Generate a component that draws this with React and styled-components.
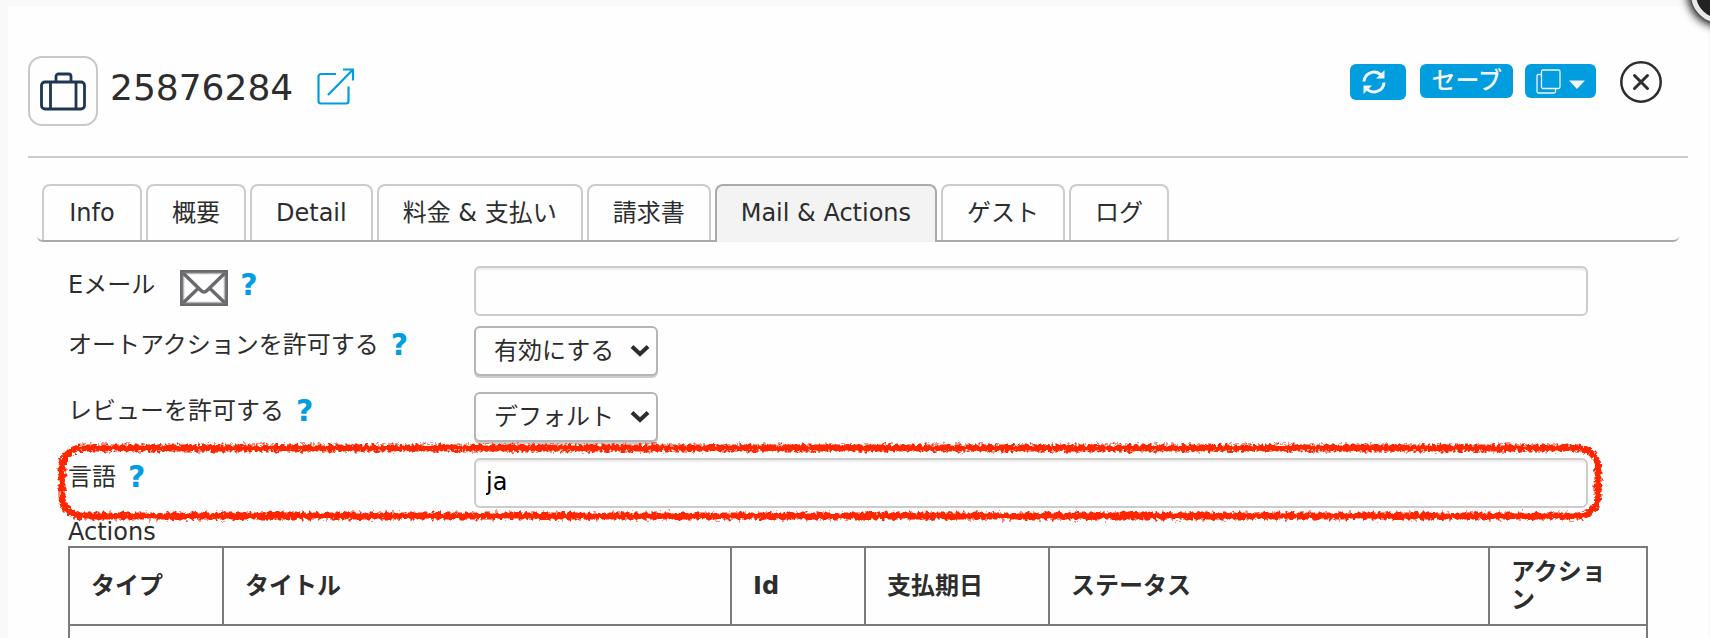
import React from 'react';
import styled, {createGlobalStyle} from "styled-components";

const GlobalStyle = createGlobalStyle`
  * {
    box-sizing: border-box;
  }

  body {
    margin: 0;
    background-color: #f9f9f9;
    color: #2d2d2d;
    font-family: "DejaVu Sans", Verdana, "Noto Sans CJK JP", sans-serif;
    font-size: 24px;
    line-height: 28px;
  }

  button, input, select {
    font: inherit;
    color: inherit;
  }
`;

const Page = styled.div`
  position: relative;
  overflow: hidden;
  min-height: 100vh;
  padding: 6px 2px 0 8px;
`;

const Panel = styled.main`
  min-height: calc(100vh - 6px);
  padding: 50px 20px 0;
  background-color: #fefefe;
`;

const Header = styled.header`
  display: flex;
  align-items: flex-start;
  height: 102px;
  border-bottom: 2px solid #ccc;
`;

const IconBox = styled.span`
  width: 70px;
  height: 70px;
  border: 2px solid #c8c8c8;
  border-radius: 14px;
  display: flex;
  align-items: center;
  justify-content: center;
`;

const Title = styled.h1`
  margin: 11px 24px 0 12px;
  font-size: 36px;
  font-weight: normal;
  line-height: 42px;
`;

const OpenLink = styled.a`
  display: flex;
  margin-top: 11px;
  color: #009ddf;
`;

const Toolbar = styled.div`
  display: flex;
  align-items: flex-start;
  gap: 12px;
  margin: 8px 26px 0 auto;
`;

const ToolButton = styled.button`
  display: flex;
  align-items: center;
  justify-content: center;
  gap: 8px;
  min-width: 56px;
  height: ${({$tall}) => $tall ? 36 : 34}px;
  margin-right: ${({$tall}) => $tall ? 2 : 0}px;
  padding: 0 11px;
  border: none;
  border-radius: 6px;
  background-color: #009ddf;
  color: #f3f3f3;
  font-weight: 500;
  line-height: 30px;
  cursor: pointer;
`;

const CloseButton = styled.button`
  display: flex;
  margin: -3px 0 0 12px;
  padding: 0;
  border: none;
  background: none;
  cursor: pointer;
`;

const Tabs = styled.nav`
  display: flex;
  align-items: flex-start;
  gap: 4px;
  margin: 26px 9px 0;
  padding: 0 5px;
  height: 58px;
  border-bottom: 2px solid #aaa;
  border-radius: 0 0 6px 6px;
`;

const Tab = styled.button`
  min-width: 100px;
  height: ${({$active}) => $active ? 58 : 56}px;
  padding: 0 24px ${({$active}) => $active ? 2 : 0}px;
  border: 2px solid ${({$active}) => $active ? '#aaa' : '#ccc'};
  border-bottom: none;
  border-radius: 8px 8px 0 0;
  background-color: ${({$active}) => $active ? '#f3f3f3' : '#fefefe'};
  white-space: nowrap;
  cursor: pointer;
`;

const Content = styled.section`
  padding: 24px 40px 0;
`;

const Row = styled.div`
  position: relative;
  display: grid;
  grid-template-columns: 406px 1fr;
  align-items: start;
  min-height: 50px;
  margin: 0 60px ${({$gap}) => $gap || 16}px 0;
`;

const LabelCell = styled.div`
  display: flex;
  align-items: center;
  height: 38px;
`;

const Envelope = styled.svg`
  margin: 6px 0 0 25px;
`;

const Help = styled.button`
  margin-left: 12px;
  padding: 0;
  border: none;
  background: none;
  color: #009ddf;
  font-size: 30px;
  font-weight: bold;
  line-height: 28px;
  cursor: pointer;
`;

const Input = styled.input`
  width: 100%;
  height: 50px;
  padding: 0 10px 2px;
  border: 2px solid #ccc;
  border-radius: 6px;
  background-color: #fefefe;
  box-shadow: inset 0 2px 2px rgba(0, 0, 0, 0.08);
  color: #000;
`;

const SelectWrap = styled.div`
  display: grid;
  align-items: center;
  width: 184px;

  > * {
    grid-area: 1 / 1;
  }

  svg {
    justify-self: end;
    margin-right: 8px;
    pointer-events: none;
  }
`;

const Select = styled.select`
  appearance: none;
  width: 100%;
  height: 50px;
  padding: 0 36px 0 18px;
  border: 2px solid #b5b5b5;
  border-radius: 6px;
  background-color: #fefefe;
  box-shadow: 0 2px 0 #ccc;
`;

const Marker = styled.svg`
  position: absolute;
  top: -10px;
  left: -6px;
  width: calc(100% + 16px);
  height: 68px;
  overflow: visible;
  pointer-events: none;
`;

const Table = styled.table`
  width: 100%;
  border-collapse: collapse;
  table-layout: fixed;

  caption {
    text-align: left;
  }

  th, td {
    height: 78px;
    padding: 0 21px;
    border: 2px solid #7b7b7b;
    text-align: left;
  }
`;

const Col = styled.col`
  width: ${({$width}) => $width};
`;

const CornerClose = styled.button`
  position: absolute;
  top: -35px;
  right: -39px;
  width: 58px;
  height: 58px;
  border: 5px solid #e8e8e8;
  border-radius: 50%;
  background-color: #222;
  box-shadow: 0 0 10px 3px #000;
`;

const tabs = ['Info', '概要', 'Detail', '料金 & 支払い', '請求書', 'Mail & Actions', 'ゲスト', 'ログ'];

const columns = [
    {title: 'タイプ', width: '154px'},
    {title: 'タイトル', width: 'auto'},
    {title: 'Id', width: '134px'},
    {title: '支払期日', width: '184px'},
    {title: 'ステータス', width: '440px'},
    {title: 'アクション', width: '158px'},
];

const Suitcase = () => (
    <svg width="48" height="40" viewBox="0 0 48 40" fill="none" stroke="#1f3652" strokeWidth="2.8">
        <rect x="2.500" y="11" width="43" height="27" rx="3.500"/>
        <path d="M11.500 11v27M37 11v27M17 11V5.500a2.500 2.500 0 0 1 2.500-2.500h10a2.500 2.500 0 0 1 2.500 2.500V11"/>
    </svg>
);

const External = () => (
    <svg width="38" height="38" viewBox="0 0 38 38" fill="none" stroke="currentColor" strokeWidth="2.2">
        <path d="M19 7H4a2.500 2.500 0 0 0-2.500 2.500V34a2.500 2.500 0 0 0 2.500 2.500h25a2.500 2.500 0 0 0 2.500-2.500V19.500"/>
        <path d="M11 28L35.500 3M26 2.500h10v11"/>
    </svg>
);

const Refresh = () => (
    <svg width="24" height="26" viewBox="0 0 24 26" fill="none" stroke="currentColor" strokeWidth="3">
        <path d="M2 12.500A10 10 0 0 1 19 6"/>
        <path d="M22 13.500A10 10 0 0 1 5 20"/>
        <path d="M22.500 1v8.500H14zM1.500 25v-8.500H10z" fill="currentColor" stroke="none"/>
    </svg>
);

const Copy = () => (
    <svg width="25" height="25" viewBox="0 0 25 25" fill="none" stroke="currentColor" strokeWidth="1.3">
        <rect x="5.500" y="1" width="18.500" height="18.500" rx="1.500"/>
        <path d="M5.500 5.500H2.500A1.500 1.500 0 0 0 1 7v15.500A1.500 1.500 0 0 0 2.500 24H18a1.500 1.500 0 0 0 1.500-1.500v-3"/>
    </svg>
);

const Caret = () => (
    <svg width="16" height="15" viewBox="0 0 16 15" fill="currentColor">
        <path d="M0 6.500h16L8 15z"/>
    </svg>
);

const CloseIcon = () => (
    <svg width="42" height="42" viewBox="0 0 42 42" fill="none" stroke="#2d2d2d" strokeLinecap="round">
        <circle cx="21" cy="21" r="19.700" strokeWidth="2.500"/>
        <path d="M14.500 14.500l13 13M27.500 14.500l-13 13" strokeWidth="3"/>
    </svg>
);

const EnvelopeIcon = () => (
    <Envelope width="48" height="36" viewBox="0 0 48 36" fill="none" stroke="#69696e">
        <rect x="1.500" y="1.500" width="45" height="33" fill="#fefefe" strokeWidth="3"/>
        <rect x="3.500" y="3.500" width="41" height="29" stroke="#b4b4b8" strokeWidth="1.500"/>
        <path d="M3 3l18 17.500q3 3 6 0L45 3M3 33l14.500-14M45 33L30.500 19" strokeWidth="3.400"/>
    </Envelope>
);

const Chevron = () => (
    <svg width="20" height="14" viewBox="0 0 20 14" fill="none" stroke="#2d2d2d" strokeWidth="4">
        <path d="M2 2.500l8 7.500 8-7.500"/>
    </svg>
);

const Highlight = () => (
    <Marker aria-hidden="true">
        <filter id="crayon" filterUnits="userSpaceOnUse" x="-12" y="-12" width="110%" height="100">
            <feTurbulence type="fractalNoise" baseFrequency="0.3" numOctaves="2" seed="4" result="noise"/>
            <feDisplacementMap in="SourceGraphic" in2="noise" scale="8" xChannelSelector="R" yChannelSelector="G"/>
        </filter>
        <g filter="url(#crayon)">
            <rect width="100%" height="100%" rx="20" fill="none" stroke="#ff2600" strokeWidth="7"/>
        </g>
    </Marker>
);

const Field = ({id, label, icon, gap, marked, children}) => (
    <Row $gap={gap}>
        <LabelCell>
            <label htmlFor={id}>{label}</label>
            {icon}
            <Help type="button" aria-label={`${label} ?`}>?</Help>
        </LabelCell>
        {children}
        {marked && <Highlight/>}
    </Row>
);

const SelectField = ({id, option}) => (
    <SelectWrap>
        <Select id={id} defaultValue={option}>
            <option>{option}</option>
        </Select>
        <Chevron/>
    </SelectWrap>
);

const App = () => {
    return (
        <Page>
            <GlobalStyle/>
            <Panel>
                <Header>
                    <IconBox><Suitcase/></IconBox>
                    <Title>25876284</Title>
                    <OpenLink href="#open" aria-label="Open"><External/></OpenLink>
                    <Toolbar>
                        <ToolButton type="button" $tall aria-label="Refresh"><Refresh/><span/></ToolButton>
                        <ToolButton type="button">セーブ</ToolButton>
                        <ToolButton type="button" aria-label="Copy"><Copy/><Caret/></ToolButton>
                        <CloseButton type="button" aria-label="Close"><CloseIcon/></CloseButton>
                    </Toolbar>
                </Header>
                <Tabs>
                    {tabs.map(tab => (
                        <Tab key={tab} type="button" $active={tab === 'Mail & Actions'}>{tab}</Tab>
                    ))}
                </Tabs>
                <Content>
                    <Field id="email" label="Eメール" icon={<EnvelopeIcon/>} gap={10}>
                        <Input id="email" type="text"/>
                    </Field>
                    <Field id="auto-action" label="オートアクションを許可する">
                        <SelectField id="auto-action" option="有効にする"/>
                    </Field>
                    <Field id="review" label="レビューを許可する">
                        <SelectField id="review" option="デフォルト"/>
                    </Field>
                    <Field id="language" label="言語" gap={10} marked>
                        <Input id="language" type="text" defaultValue="ja"/>
                    </Field>
                    <Table>
                        <caption>Actions</caption>
                        <colgroup>
                            {columns.map(({title, width}) => <Col key={title} $width={width}/>)}
                        </colgroup>
                        <thead>
                            <tr>
                                {columns.map(({title}) => <th key={title} scope="col">{title}</th>)}
                            </tr>
                        </thead>
                        <tbody>
                            <tr>
                                <td colSpan={columns.length}/>
                            </tr>
                        </tbody>
                    </Table>
                </Content>
            </Panel>
            <CornerClose type="button" aria-label="Close window"/>
        </Page>
    );
};

export default App;
